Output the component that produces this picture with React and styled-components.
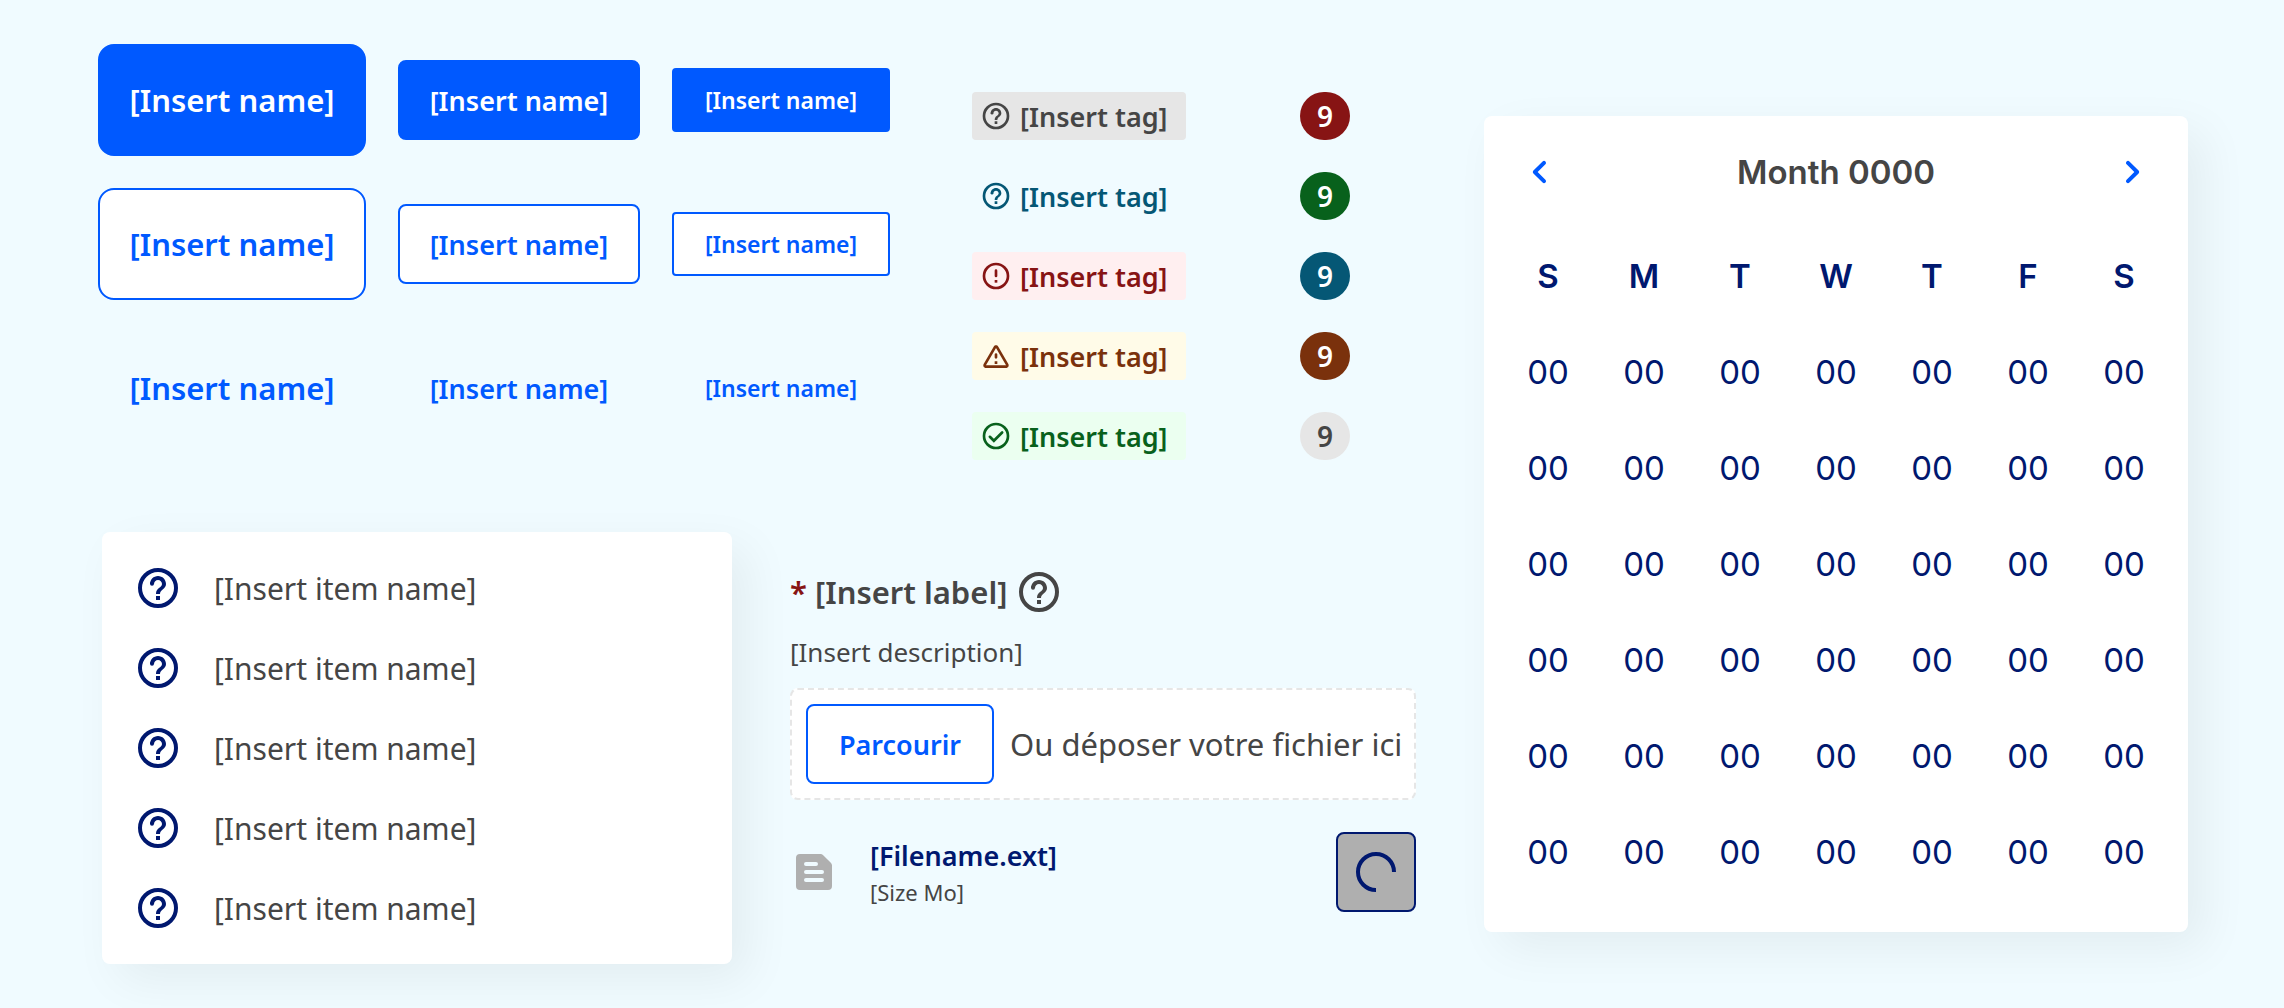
import React from 'react';
import styled, { createGlobalStyle, css } from 'styled-components';

const colors = {
  page: '#f0fbff',
  primary: '#0059ff',
  navy: '#00186f',
  text: '#454545',
  grey: '#e6e6e6',
  greyDark: '#afafaf',
  red: '#871414',
  green: '#08611c',
  blue: '#055775',
  brown: '#7a310c',
};

const buttonSizes = ['large', 'medium', 'small'];
const buttonVariants = ['primary', 'secondary', 'tertiary'];

const tags = [
  { icon: 'help', color: colors.text, background: colors.grey },
  { icon: 'help', color: colors.blue, background: colors.page },
  { icon: 'error', color: colors.red, background: '#ffeff0' },
  { icon: 'warning', color: colors.brown, background: '#fffbe8' },
  { icon: 'success', color: colors.green, background: '#ebfff0' },
];

const badges = [
  { color: '#ffffff', background: colors.red },
  { color: '#ffffff', background: colors.green },
  { color: '#ffffff', background: colors.blue },
  { color: '#ffffff', background: colors.brown },
  { color: colors.text, background: colors.grey },
];

const items = [1, 2, 3, 4, 5];
const days = ['S', 'M', 'T', 'W', 'T', 'F', 'S'];
const weeks = [1, 2, 3, 4, 5, 6];

export default function App() {
  return (
    <Page>
      <GlobalStyle />
      <Left>
        <TopRow>
          <ButtonGrid>
            {buttonVariants.map((variant) =>
              buttonSizes.map((size) => (
                <Button key={variant + size} type="button" $variant={variant} $size={size}>
                  [Insert name]
                </Button>
              ))
            )}
          </ButtonGrid>
          <TagList>
            {tags.map((tag, i) => (
              <Tag key={i} $color={tag.color} $background={tag.background}>
                <Icon name={tag.icon} size={32} />
                [Insert tag]
              </Tag>
            ))}
          </TagList>
          <BadgeList>
            {badges.map((badge, i) => (
              <Badge key={i} $color={badge.color} $background={badge.background}>9</Badge>
            ))}
          </BadgeList>
        </TopRow>
        <BottomRow>
          <Menu>
            {items.map((item) => (
              <MenuItem key={item}>
                <MenuButton type="button">
                  <MenuIcon><Icon name="help" size={48} /></MenuIcon>
                  [Insert item name]
                </MenuButton>
              </MenuItem>
            ))}
          </Menu>
          <FileUpload />
        </BottomRow>
      </Left>
      <Calendar />
    </Page>
  );
}

function FileUpload() {
  return (
    <Upload>
      <LabelRow>
        <Required>*</Required>
        <Label htmlFor="browse">[Insert label]</Label>
        <Icon name="help" size={48} />
      </LabelRow>
      <Description id="browse-description">[Insert description]</Description>
      <DropZone>
        <Button id="browse" type="button" aria-describedby="browse-description" $variant="secondary" $size="medium" $fit>
          Parcourir
        </Button>
        <DropText>Ou déposer votre fichier ici</DropText>
      </DropZone>
      <FileRow>
        <FileIcon />
        <FileInfo>
          <FileName>[Filename.ext]</FileName>
          <FileSize>[Size Mo]</FileSize>
        </FileInfo>
        <LoadingButton type="button" aria-label="Chargement" disabled>
          <svg width="48" height="48" viewBox="0 0 48 48" fill="none" aria-hidden="true">
            <path d="M24 42A18 18 0 1 1 42 24" stroke="currentColor" strokeWidth="4" />
          </svg>
        </LoadingButton>
      </FileRow>
    </Upload>
  );
}

function Calendar() {
  return (
    <CalendarCard>
      <CalendarHeader>
        <NavButton type="button" aria-label="Previous month"><Icon name="left" size={48} /></NavButton>
        <Month>Month 0000</Month>
        <NavButton type="button" aria-label="Next month"><Icon name="right" size={48} /></NavButton>
      </CalendarHeader>
      <Days>
        <thead>
          <tr>{days.map((day, i) => <DayName key={i} scope="col">{day}</DayName>)}</tr>
        </thead>
        <tbody>
          {weeks.map((week) => (
            <tr key={week}>{days.map((day, i) => <Day key={i}>00</Day>)}</tr>
          ))}
        </tbody>
      </Days>
    </CalendarCard>
  );
}

const ring = <circle cx="12" cy="12" r="9" fill="none" stroke="currentColor" strokeWidth="2" />;

const shapes = {
  help: (
    <>
      {ring}
      <path d="M11 16h2v2h-2zM12 6c-2.21 0-4 1.79-4 4h2c0-1.1.9-2 2-2s2 .9 2 2c0 2-3 1.75-3 5h2c0-2.25 3-2.5 3-5 0-2.21-1.79-4-4-4z" />
      <circle cx="9" cy="9.9" r="1" />
    </>
  ),
  error: (
    <>
      {ring}
      <rect x="11" y="7" width="2" height="6" rx="1" />
      <rect x="11" y="15" width="2" height="2" />
    </>
  ),
  warning: (
    <path d="M12 5.99L19.53 19H4.47L12 5.99M2.74 18c-.77 1.33.19 3 1.73 3h15.06c1.54 0 2.5-1.67 1.73-3L13.73 4.99c-.77-1.33-2.69-1.33-3.46 0L2.74 18zM11 11v2c0 .55.45 1 1 1s1-.45 1-1v-2c0-.55-.45-1-1-1s-1 .45-1 1zm0 5h2v2h-2z" />
  ),
  success: (
    <>
      {ring}
      <path d="M7.4 12.6l3 3 6.2-6.2" fill="none" stroke="currentColor" strokeWidth="2" strokeLinecap="round" />
    </>
  ),
  left: (
    <path d="M14.71 6.71c-.39-.39-1.02-.39-1.41 0L8.71 11.3c-.39.39-.39 1.02 0 1.41l4.59 4.59c.39.39 1.02.39 1.41 0 .39-.39.39-1.02 0-1.41L10.83 12l3.88-3.88c.39-.39.38-1.03 0-1.41z" />
  ),
  right: (
    <path d="M9.29 6.71c-.39.39-.39 1.02 0 1.41L13.17 12l-3.88 3.88c-.39.39-.39 1.02 0 1.41.39.39 1.02.39 1.41 0l4.59-4.59c.39-.39.39-1.02 0-1.41L10.7 6.7c-.38-.38-1.02-.38-1.41.01z" />
  ),
};

function Icon({ name, size }) {
  return (
    <IconSvg width={size} height={size} viewBox="0 0 24 24" fill="currentColor" aria-hidden="true">
      {shapes[name]}
    </IconSvg>
  );
}

function FileIcon() {
  return (
    <IconSvg width="48" height="48" viewBox="0 0 24 24" aria-hidden="true">
      <path fill={colors.greyDark} d="M5 3h10.2a2 2 0 0 1 1.4.6l3.8 3.8a2 2 0 0 1 .6 1.4V19a2 2 0 0 1-2 2H5a2 2 0 0 1-2-2V5a2 2 0 0 1 2-2z" />
      <path stroke={colors.page} strokeWidth="2" strokeLinecap="round" d="M8 8h5M8 12h8M8 16h8" />
    </IconSvg>
  );
}

const GlobalStyle = createGlobalStyle`
  *{
    box-sizing:border-box;
  }
  body{
    margin:0;
    background-color:${colors.page};
    color:${colors.text};
    font-family:'Noto Sans', sans-serif;
  }
  button{
    font-family:inherit;
    cursor:pointer;
  }
`

const Page = styled.main`
  display:grid;
  grid-template-columns:minmax(0, 1318fr) minmax(0, 704fr);
  align-items:start;
  gap:68px;
  padding:44px 96px 44px 98px;
`

const Left = styled.div`
  display:flex;
  flex-direction:column;
  gap:72px;
`

const TopRow = styled.div`
  display:flex;
  align-items:flex-start;
`

const ButtonGrid = styled.div`
  display:grid;
  grid-template-columns:repeat(3, auto);
  grid-auto-rows:112px;
  align-items:center;
  gap:32px;
`

const sizes = {
  large: css`
    min-width:268px;
    height:112px;
    border-radius:16px;
    font-size:31px;
  `,
  medium: css`
    min-width:242px;
    height:80px;
    border-radius:8px;
    font-size:27px;
  `,
  small: css`
    min-width:218px;
    height:64px;
    border-radius:4px;
    font-size:23px;
  `,
}

const variants = {
  primary: css`
    color:white;
    background-color:${colors.primary};
    border-color:${colors.primary};
  `,
  secondary: css`
    color:${colors.primary};
    background-color:white;
    border-color:${colors.primary};
  `,
  tertiary: css`
    color:${colors.primary};
    background-color:transparent;
    border-color:transparent;
  `,
}

const Button = styled.button`
  padding:0 24px;
  border:2px solid;
  font-weight:600;
  white-space:nowrap;
  ${(props) => sizes[props.$size]}
  ${(props) => variants[props.$variant]}
  ${(props) => props.$fit && 'min-width:188px;'}
`

const IconSvg = styled.svg`
  display:block;
  flex-shrink:0;
`

const TagList = styled.div`
  display:flex;
  flex-direction:column;
  gap:32px;
  margin:48px 0 0 82px;
`

const Tag = styled.span`
  display:flex;
  align-items:center;
  gap:8px;
  min-width:214px;
  height:48px;
  padding:0 16px 0 8px;
  border-radius:4px;
  font-size:27px;
  font-weight:600;
  white-space:nowrap;
  color:${(props) => props.$color};
  background-color:${(props) => props.$background};
`

const BadgeList = styled(TagList)`
  margin-left:114px;
`

const Badge = styled.span`
  display:flex;
  align-items:center;
  justify-content:center;
  width:50px;
  height:48px;
  border-radius:24px;
  font-size:28px;
  font-weight:600;
  color:${(props) => props.$color};
  background-color:${(props) => props.$background};
`

const BottomRow = styled.div`
  display:grid;
  grid-template-columns:minmax(0, 630fr) minmax(0, 626fr);
  align-items:start;
  gap:58px;
  padding-left:4px;
`

const Card = styled.div`
  background-color:white;
  border-radius:8px;
  box-shadow:16px 16px 48px rgba(0, 0, 0, 0.06);
`

const Menu = styled(Card).attrs({ as: 'ul' })`
  margin:0;
  padding:16px 0;
  list-style:none;
`

const MenuItem = styled.li`
  display:flex;
`

const MenuButton = styled.button`
  flex:1;
  display:flex;
  align-items:center;
  gap:32px;
  height:80px;
  padding:0 32px;
  border:none;
  background:none;
  color:${colors.text};
  font-size:30px;
`

const MenuIcon = styled.span`
  color:${colors.navy};
`

const Upload = styled.section`
  display:flex;
  flex-direction:column;
  gap:16px;
  padding-top:36px;
`

const LabelRow = styled.div`
  display:flex;
  align-items:center;
  gap:8px;
  font-size:31px;
  font-weight:600;
`

const Required = styled.span`
  color:${colors.red};
`

const Label = styled.label`
  white-space:nowrap;
`

const Description = styled.p`
  margin:0;
  font-size:26px;
  line-height:40px;
`

const DropZone = styled.div`
  display:flex;
  align-items:center;
  gap:16px;
  padding:14px;
  border:2px dashed ${colors.grey};
  border-radius:8px;
  background-color:white;
`

const DropText = styled.span`
  font-size:31px;
  white-space:nowrap;
`

const FileRow = styled.div`
  display:flex;
  align-items:center;
  gap:32px;
  margin-top:16px;
`

const FileInfo = styled.div`
  flex:1;
  display:flex;
  flex-direction:column;
  padding-top:4px;
  line-height:36px;
`

const FileName = styled.span`
  color:${colors.navy};
  font-size:27px;
  font-weight:600;
`

const FileSize = styled.span`
  font-size:22px;
`

const LoadingButton = styled.button`
  display:flex;
  align-items:center;
  justify-content:center;
  width:80px;
  height:80px;
  padding:0;
  border:2px solid ${colors.navy};
  border-radius:8px;
  color:${colors.navy};
  background-color:${colors.greyDark};
`

const CalendarCard = styled(Card)`
  display:flex;
  flex-direction:column;
  gap:32px;
  margin-top:72px;
  padding:32px 16px;
  font-family:Inter, sans-serif;
`

const CalendarHeader = styled.div`
  display:flex;
  align-items:center;
  justify-content:space-between;
  padding:0 16px;
`

const NavButton = styled.button`
  padding:0;
  border:none;
  background:none;
  color:${colors.primary};
`

const Month = styled.h2`
  margin:0;
  font-size:33px;
  font-weight:600;
`

const Days = styled.table`
  width:100%;
  table-layout:fixed;
  border-collapse:collapse;
  color:${colors.navy};
  font-size:33px;
  text-align:center;
`

const DayName = styled.th`
  height:96px;
  padding:0;
  font-weight:600;
`

const Day = styled.td`
  height:96px;
  padding:0;
`
